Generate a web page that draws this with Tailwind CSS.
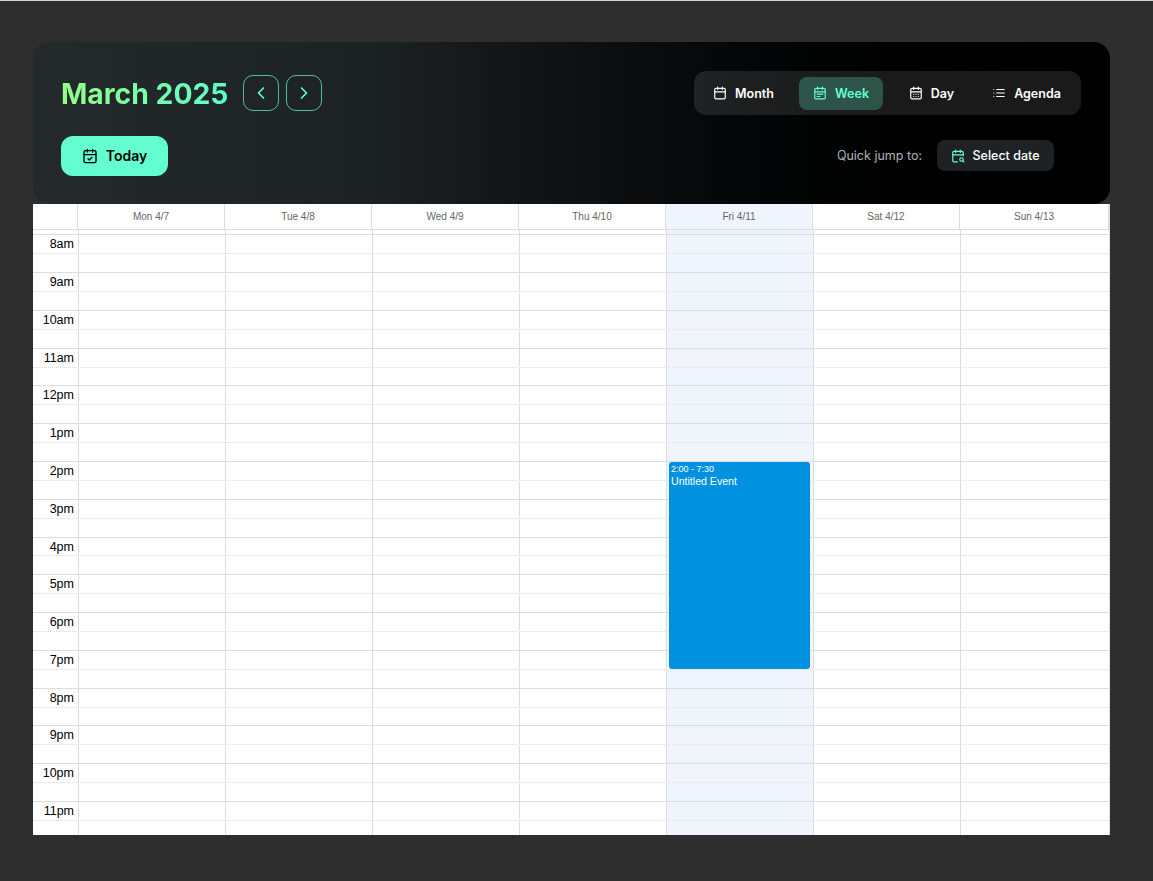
<!DOCTYPE html>
<html lang="en">

<head>
    <meta charset="UTF-8">
    <meta name="viewport" content="width=device-width, initial-scale=1.0">
    <title>Calendar</title>
    <script src="https://cdn.jsdelivr.net/npm/@tailwindcss/browser@4"></script>
</head>

<body class="bg-[#2e2e2e] h-[881px] overflow-hidden border-t border-[#d4d4d4] font-['Inter',sans-serif]">
    <div class="w-[1077px] ml-[33px] mt-[41px]">

        <!-- toolbar -->
        <div class="h-[162px] rounded-2xl bg-linear-to-r from-[#242a2c] via-[#1d2224] via-30% to-[#000000] to-100% pt-[29px] px-[28px] pr-[29px]">
            <div class="flex items-center justify-between h-[44px]">
                <div class="flex items-center">
                    <h1 class="text-[28.3px] font-bold leading-9 pt-[2px] bg-linear-to-r from-[#92ff86] to-[#5cffc9] bg-clip-text text-transparent">March 2025</h1>
                    <button class="ml-[15px] w-9 h-9 rounded-[10px] border border-[#64ffd0]/70 flex items-center justify-center text-[#64ffd0]">
                        <svg class="w-5 h-5" viewBox="0 0 24 24" fill="none" stroke="currentColor" stroke-width="2" stroke-linecap="round" stroke-linejoin="round"><path d="M15 18l-6-6 6-6" /></svg>
                    </button>
                    <button class="ml-[7px] w-9 h-9 rounded-[10px] border border-[#64ffd0]/70 flex items-center justify-center text-[#64ffd0]">
                        <svg class="w-5 h-5" viewBox="0 0 24 24" fill="none" stroke="currentColor" stroke-width="2" stroke-linecap="round" stroke-linejoin="round"><path d="M9 18l6-6-6-6" /></svg>
                    </button>
                </div>
                <div class="flex items-center h-[44px] w-[387px] rounded-xl bg-white/10 px-[5px] text-[12.5px] font-semibold text-white">
                    <button class="w-[89px] h-[33px] mr-[11px] flex items-center justify-center gap-2">
                        <svg class="w-[14px] h-[14px]" viewBox="0 0 24 24" fill="none" stroke="currentColor" stroke-width="2" stroke-linecap="round" stroke-linejoin="round"><rect x="3" y="4" width="18" height="18" rx="2" /><path d="M8 2v4M16 2v4M3 10h18" /></svg>
                        <span class="pt-[2px]">Month</span>
                    </button>
                    <button class="w-[84px] h-[33px] rounded-lg bg-[#64ffd0]/25 flex items-center justify-center gap-2 text-[#64ffd0]">
                        <svg class="w-[14px] h-[14px]" viewBox="0 0 24 24" fill="none" stroke="currentColor" stroke-width="2" stroke-linecap="round" stroke-linejoin="round"><rect x="3" y="4" width="18" height="18" rx="2" /><path d="M8 2v4M16 2v4M3 10h18M7 14h10M7 18h5" /></svg>
                        <span class="pt-[2px]">Week</span>
                    </button>
                    <button class="w-[97px] h-[33px] flex items-center justify-center gap-2">
                        <svg class="w-[14px] h-[14px]" viewBox="0 0 24 24" fill="none" stroke="currentColor" stroke-width="2" stroke-linecap="round" stroke-linejoin="round"><rect x="3" y="4" width="18" height="18" rx="2" /><path d="M8 2v4M16 2v4M3 10h18M8 14h.01M12 14h.01M16 14h.01M8 18h.01M12 18h.01M16 18h.01" /></svg>
                        <span class="pt-[2px]">Day</span>
                    </button>
                    <button class="w-[93px] h-[33px] flex items-center justify-center gap-2">
                        <svg class="w-[14px] h-[14px]" viewBox="0 0 24 24" fill="none" stroke="currentColor" stroke-width="2" stroke-linecap="round" stroke-linejoin="round"><path d="M8 6h13M8 12h13M8 18h13M3 6h.01M3 12h.01M3 18h.01" /></svg>
                        <span class="pt-[2px]">Agenda</span>
                    </button>
                </div>
            </div>

            <div class="flex items-center justify-between mt-[21px] h-[40px]">
                <button class="w-[107px] h-10 rounded-xl bg-[#64ffd0] flex items-center justify-center gap-2 text-[14px] font-semibold text-black">
                    <svg class="w-4 h-4" viewBox="0 0 24 24" fill="none" stroke="currentColor" stroke-width="2" stroke-linecap="round" stroke-linejoin="round"><rect x="3" y="4" width="18" height="18" rx="2" /><path d="M8 2v4M16 2v4M3 10h18M9 16l2 2 4-4" /></svg>
                    <span class="pb-[2px]">Today</span>
                </button>
                <div class="flex items-center mr-[27px] -mt-[1px]">
                    <span class="text-[12.5px] text-white/70 pt-[2px]">Quick jump to:</span>
                    <button class="ml-[15px] w-[117px] h-[31px] rounded-lg bg-[#1e2224] flex items-center justify-center gap-[7px] text-[12.5px] font-medium text-white">
                        <svg class="w-[14px] h-[14px] text-[#64ffd0]" viewBox="0 0 24 24" fill="none" stroke="currentColor" stroke-width="2" stroke-linecap="round" stroke-linejoin="round"><path d="M21 11V6a2 2 0 0 0-2-2H5a2 2 0 0 0-2 2v14a2 2 0 0 0 2 2h6" /><path d="M8 2v4M16 2v4M3 10h18" /><circle cx="18" cy="18" r="3" /><path d="M22 22l-1.9-1.9" /></svg>
                        <span class="pt-[2px]">Select date</span>
                    </button>
                </div>
            </div>
        </div>

        <!-- calendar -->
        <div class="h-[631px] bg-white overflow-hidden border-r border-[#dddddd] font-['Liberation_Sans',sans-serif]">
            <div class="flex h-[26px] border-b border-[#dddddd] text-[10px] text-[#666666]">
                <div class="w-[45px] border-r border-[#dddddd]"></div>
                <div class="w-[147px] border-r border-[#dddddd] flex items-center justify-center">Mon 4/7</div>
                <div class="w-[147px] border-r border-[#dddddd] flex items-center justify-center">Tue 4/8</div>
                <div class="w-[147px] border-r border-[#dddddd] flex items-center justify-center">Wed 4/9</div>
                <div class="w-[147px] border-r border-[#dddddd] flex items-center justify-center">Thu 4/10</div>
                <div class="w-[147px] border-r border-[#dddddd] bg-[#f0f5fd] flex items-center justify-center">Fri 4/11</div>
                <div class="w-[147px] border-r border-[#dddddd] flex items-center justify-center">Sat 4/12</div>
                <div class="flex-1 border-r border-[#dddddd] flex items-center justify-center">Sun 4/13</div>
            </div>
            <div id="grid" class="relative">
                <div class="absolute left-[636px] top-[232px] w-[141px] h-[207px] rounded-[3px] bg-[#0091e0] px-[2px] pt-[1px] text-white z-10">
                    <div class="text-[9px] leading-[12px]">2:00 - 7:30</div>
                    <div class="text-[10.6px] leading-[13px]">Untitled Event</div>
                </div>
            </div>
        </div>
    </div>

    <script>
        const hours = ['8am', '9am', '10am', '11am', '12pm', '1pm', '2pm', '3pm', '4pm', '5pm', '6pm', '7pm', '8pm', '9pm', '10pm', '11pm'];

        function row(heightClass, borderClass, label) {
            let cells = '';
            for (let i = 0; i < 7; i++) {
                const fri = i === 4 ? ' bg-[#f0f5fd]' : '';
                cells += `<div class="w-[147px] h-full border-l border-[#dddddd]${fri}"></div>`;
            }
            return `<div class="flex ${heightClass} ${borderClass}">
                <div class="w-[45px] pr-[4px] text-right text-[12.5px] leading-[19px] text-black">${label}</div>${cells}
            </div>`;
        }

        let html = row('h-[4.3px]', 'border-t-0', '');
        for (const h of hours) {
            html += row('h-[18.9px]', 'border-t border-[#dddddd]', h);
            html += row('h-[18.9px]', 'border-t border-dotted border-[#dddddd]', '');
        }
        document.getElementById('grid').insertAdjacentHTML('beforeend', html);
    </script>
</body>

</html>
